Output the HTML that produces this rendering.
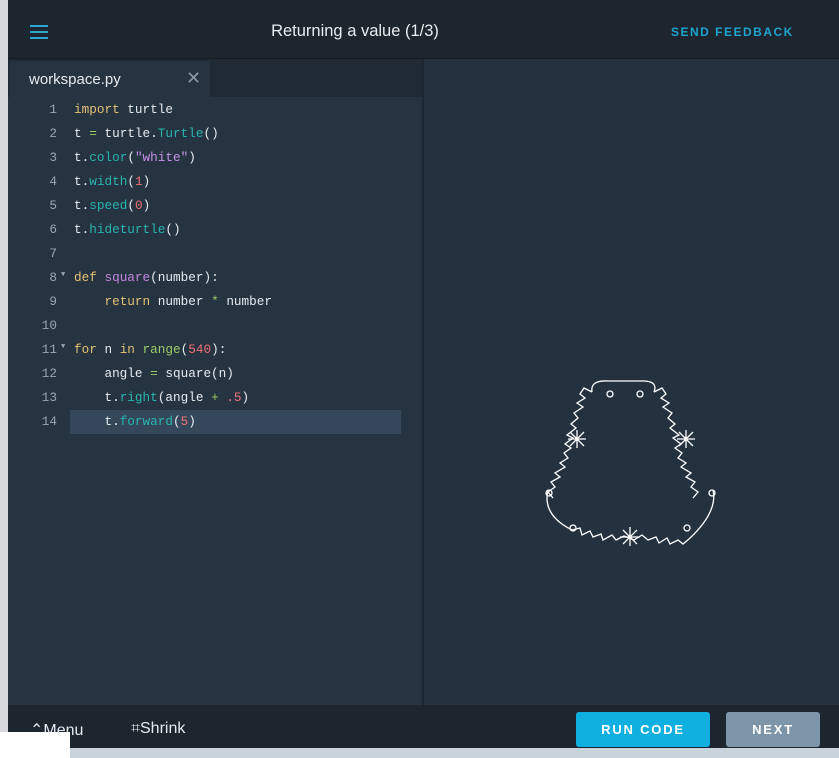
<!DOCTYPE html>
<html><head><meta charset="utf-8"><style>
*{margin:0;padding:0;box-sizing:border-box}
body{width:839px;height:758px;overflow:hidden;background:#1c2630;position:relative;font-family:"Liberation Sans",sans-serif}
.top{position:absolute;left:8px;top:0;width:831px;height:59px;background:#1d252f;border-bottom:1px solid #151b22}
.title{position:absolute;left:263px;width:168px;top:22px;text-align:center;color:#e8ecef;font-size:16.5px;white-space:nowrap}
.fb{position:absolute;left:663px;top:25px;color:#1fa3cf;font-size:12px;letter-spacing:1.5px;font-weight:bold}
.ham{position:absolute;left:22px;top:25px;width:18px;height:14px}
.ham i{display:block;height:2px;background:#2aa6d3;margin-bottom:4px}
.ed{position:absolute;left:8px;top:59px;width:414px;height:646px;background:#263340}
.tabbar{position:absolute;left:0;top:0;width:414px;height:38px;background:#1f2a35}
.tab{position:absolute;left:2px;top:2px;width:200px;height:36px;background:#263340;color:#e6eaee;font-size:15px;padding:10px 0 0 19px}
.tab span{position:absolute;left:176px;top:7px;color:#8a98a6;font-size:18px}
.rp{position:absolute;left:423px;top:59px;width:416px;height:646px;background:#243240;border-left:1px solid #1c2630}
.code{position:absolute;left:8px;top:98px;width:414px;font-family:"Liberation Mono",monospace;font-size:12.7px;color:#e6eaee}
.l{height:24px;line-height:24px;position:relative;white-space:pre}
.n{position:absolute;left:0;width:49px;text-align:right;color:#9aa6b2}
.c{position:absolute;left:66px}
.hl{position:absolute;left:62px;top:312px;width:331px;height:24px;background:#34485a}
.ar{position:absolute;left:53px;font-size:7px;color:#9aa6b2;top:-3px}
.k{color:#e3c274}.f{color:#c586e0}.g{color:#9ccc65}.t{color:#26b5b0}.s{color:#c792ea}.r{color:#f07178}.o{color:#9ccc65}
.bot{position:absolute;left:8px;top:705px;width:831px;height:43px;background:#1d252f;color:#e6eaee;font-size:16px}
.btn{position:absolute;top:7px;height:35px;border-radius:3px;color:#fff;font-size:13px;font-weight:bold;letter-spacing:1.8px;text-align:center;line-height:35px}
</style></head><body>
<div class="top"><div class="ham"><i></i><i></i><i></i></div><div class="title">Returning a value (1/3)</div><div class="fb">SEND FEEDBACK</div></div>
<div class="ed"><div class="tabbar"><div class="tab">workspace.py<span>✕</span></div></div></div>
<div class="rp"></div>
<div class="code">
<div class="hl"></div>
<div class="l"><span class="n">1</span><span class="c"><span class="k">import</span> turtle</span></div>
<div class="l"><span class="n">2</span><span class="c">t <span class="o">=</span> turtle.<span class="t">Turtle</span>()</span></div>
<div class="l"><span class="n">3</span><span class="c">t.<span class="t">color</span>(<span class="s">"white"</span>)</span></div>
<div class="l"><span class="n">4</span><span class="c">t.<span class="t">width</span>(<span class="r">1</span>)</span></div>
<div class="l"><span class="n">5</span><span class="c">t.<span class="t">speed</span>(<span class="r">0</span>)</span></div>
<div class="l"><span class="n">6</span><span class="c">t.<span class="t">hideturtle</span>()</span></div>
<div class="l"><span class="n">7</span></div>
<div class="l"><span class="n">8</span><span class="ar">▼</span><span class="c"><span class="k">def</span> <span class="f">square</span>(number):</span></div>
<div class="l"><span class="n">9</span><span class="c">    <span class="k">return</span> number <span class="o">*</span> number</span></div>
<div class="l"><span class="n">10</span></div>
<div class="l"><span class="n">11</span><span class="ar">▼</span><span class="c"><span class="k">for</span> n <span class="k">in</span> <span class="g">range</span>(<span class="r">540</span>):</span></div>
<div class="l"><span class="n">12</span><span class="c">    angle <span class="o">=</span> square(n)</span></div>
<div class="l"><span class="n">13</span><span class="c">    t.<span class="t">right</span>(angle <span class="o">+</span> <span class="r">.5</span>)</span></div>
<div class="l"><span class="n">14</span><span class="c">    t.<span class="t">forward</span>(<span class="r">5</span>)</span></div>
</div>
<svg style="position:absolute;left:0;top:0" width="839" height="758" fill="none" stroke="#fff" stroke-width="1.3">
<path d="M592 392 Q590 380 608 381 L645 381 Q658 382 654 392"/>
<path d="M592 392 l-8 -4 l-4 6 l5 4 l-8 5 l6 4 l-9 6 l4 5 l-7 6 l5 4 l-9 7 l6 3 l-8 6 l6 4 l-7 5 l4 5 l-8 5 l5 4 l-10 6 l5 4 l-9 5 l4 5 l-7 5 l5 6"/>
<path d="M654 392 l8 -4 l4 6 l-5 4 l8 5 l-6 4 l9 6 l-4 5 l7 6 l-5 4 l9 7 l-6 3 l8 6 l-6 4 l7 5 l-4 5 l8 5 l-5 4 l10 6 l-5 4 l9 5 l-4 5 l7 5 l-5 6"/>
<path d="M548 490 Q542 515 572 530 l8 -2 l2 7 l8 -4 l3 6 l8 -3 l2 6 l9 -5 l4 5 l8 -4 l10 4 l8 -5 l6 5 l8 -3 l3 6 l8 -5 l3 6 l8 -4 l5 4 l6 -5 Q718 512 713 490"/>
<path d="M570 432 l14 14 M584 432 l-14 14 M577 430 v18 M568 439 h18"/>
<path d="M679 432 l14 14 M693 432 l-14 14 M686 430 v18 M677 439 h18"/>
<path d="M623 530 l14 14 M637 530 l-14 14 M630 527 v19 M620 537 h20"/>
<circle cx="610" cy="394" r="3"/><circle cx="640" cy="394" r="3"/><circle cx="549" cy="493" r="3"/><circle cx="712" cy="493" r="3"/><circle cx="573" cy="528" r="3"/><circle cx="687" cy="528" r="3"/>
</svg>
<div class="bot">
<div style="position:absolute;left:22px;top:15px;font-size:16px">⌃Menu</div>
<div style="position:absolute;left:123px;top:15px">⌗Shrink</div>
<div class="btn" style="left:568px;width:134px;background:#0fb0e0">RUN CODE</div>
<div class="btn" style="left:718px;width:94px;background:#7d95a8">NEXT</div>
</div>
<div style="position:absolute;left:0;top:748px;width:839px;height:10px;background:#c9d3dc"></div>
<div style="position:absolute;left:0;top:732px;width:70px;height:26px;background:#fff"></div>
<div style="position:absolute;left:0;top:0;width:8px;height:732px;background:#d6d8db"></div>
</body></html>
